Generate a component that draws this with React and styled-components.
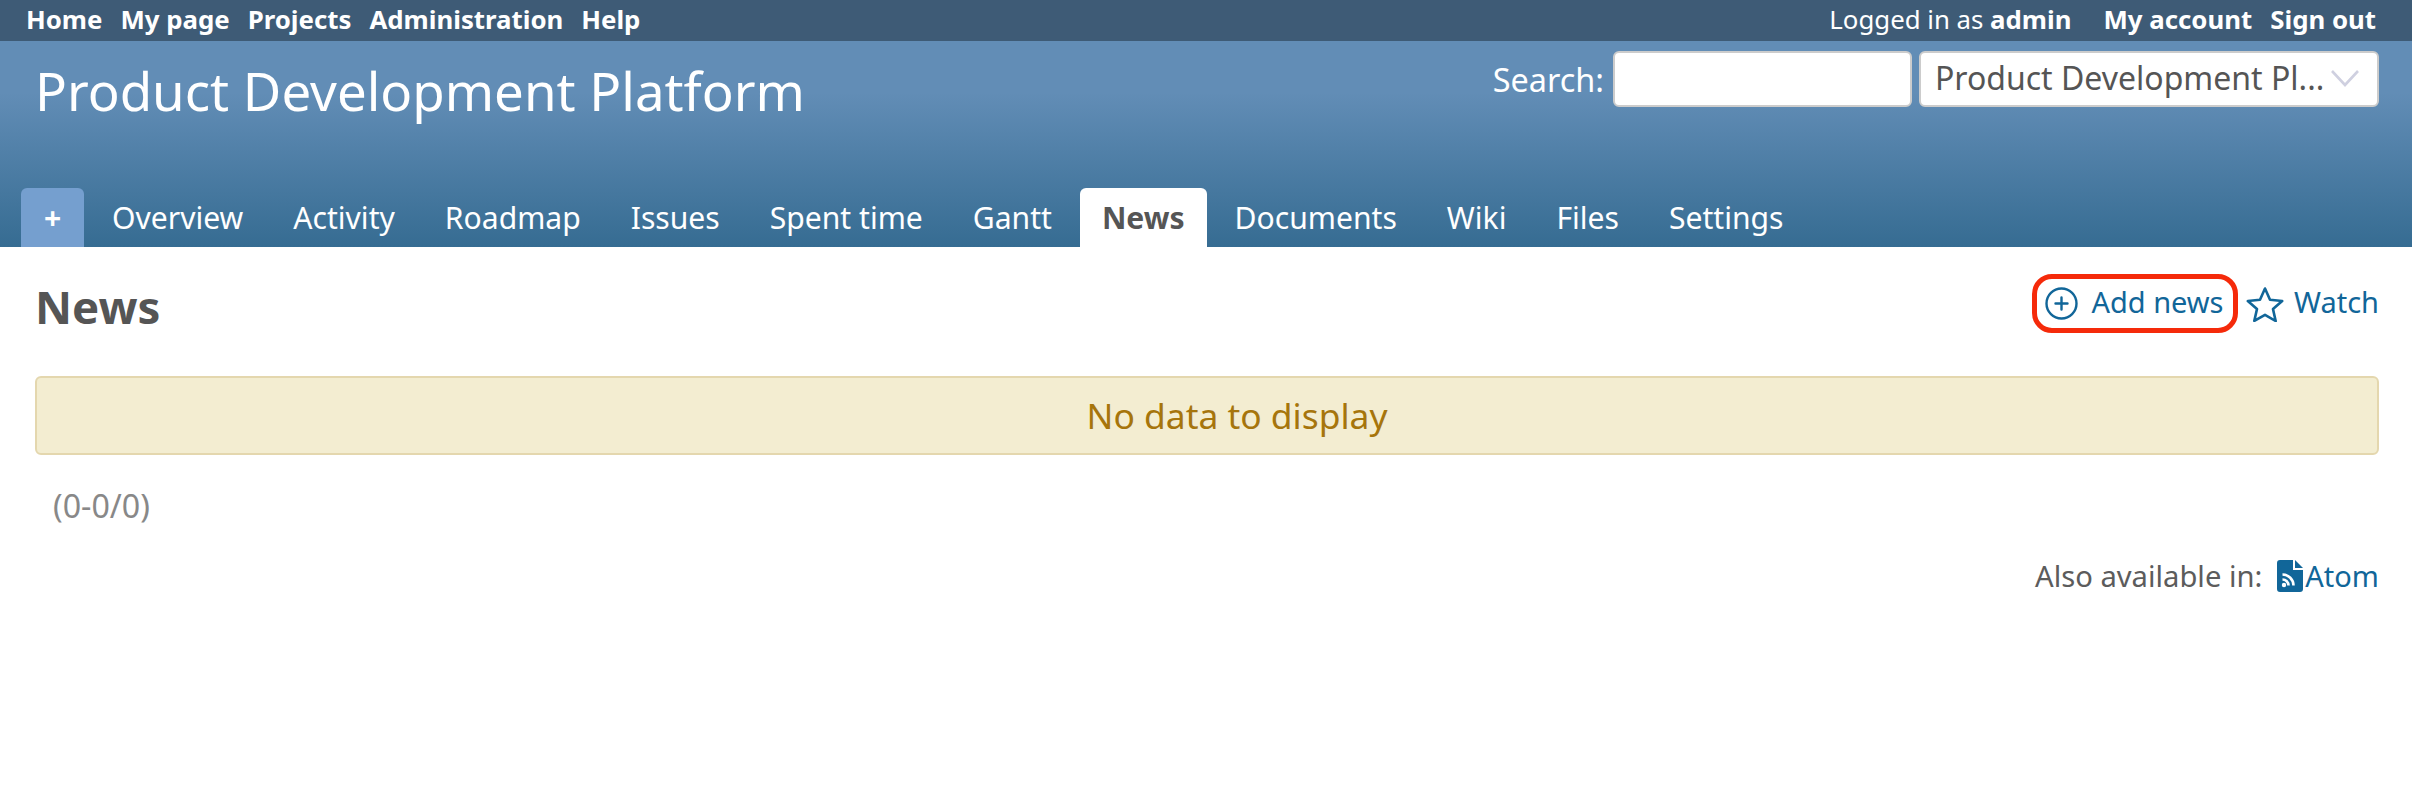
import React from 'react';
import styled, { createGlobalStyle } from 'styled-components';

const Global = createGlobalStyle`
  html, body { margin: 0; padding: 0; background: #fff; }
  body { font-family: "Noto Sans", sans-serif; color: #555; }
  * { box-sizing: border-box; }
`;
const Page = styled.div`width: 2412px; height: 800px; overflow: hidden; background: #fff;`;
const TopMenu = styled.div`
  height: 41px; background: #3e5b76; display: flex; justify-content: space-between; align-items: center;
  padding: 0 36px 4px 26px; color: #fff; font-size: 25.8px; white-space: nowrap;
`;
const TopGroup = styled.div`display: flex; align-items: center; gap: ${p => p.$gap}px;`;
const TopLink = styled.span`font-weight: 700;`;
const Logged = styled.span`margin-right: 14px; b { font-weight: 700; }`;
const Header = styled.header`
  height: 206px; padding: 10px 33px 0 21px; display: flex; flex-direction: column;
  background: linear-gradient(#628db6 0%, #628db6 25%, #366c92 100%);
`;
const HeaderTop = styled.div`display: flex; justify-content: space-between; align-items: flex-start;`;
const Title = styled.h1`margin: 5px 0 0 14px; font-size: 52.8px; font-weight: 400; color: #fff; line-height: 70px; white-space: nowrap;`;
const SearchForm = styled.div`display: flex; align-items: center; gap: 9px; color: #fff; font-size: 32.4px; line-height: 52px;`;
const SearchInput = styled.input`
  width: 299px; height: 56px; border: 2px solid #ccc; border-radius: 6px; background: #fff; outline: none; padding: 0;
  margin-right: -2px;
`;
const ProjectSelect = styled.div`
  width: 460px; height: 56px; border: 2px solid #ccc; border-radius: 6px; background: #fff; color: #555;
  display: flex; align-items: center; justify-content: space-between; padding: 0 17px 3px 14px; font-size: 32px; white-space: nowrap;
`;
const Tabs = styled.nav`margin-top: auto; display: flex; gap: 6px; height: 59px;`;
const Tab = styled.div`
  padding: 0 22px; font-size: 30.1px; line-height: 59px; color: ${p => p.$selected ? '#555' : '#fff'};
  font-weight: ${p => p.$selected ? 700 : 400}; border-radius: 6px 6px 0 0; white-space: nowrap;
  background: ${p => p.$selected ? '#fff' : 'transparent'};
`;
const PlusTab = styled(Tab)`width: 63px; padding: 0; text-align: center; background: #759fcf; font-weight: 700;`;
const Content = styled.main`padding: 27px 33px 0 35px;`;
const TitleRow = styled.div`display: flex; justify-content: space-between; align-items: center; height: 59px;`;
const Heading = styled.h2`margin: 6px 0 0; font-size: 45.6px; font-weight: 700; color: #555; line-height: 59px;`;
const Actions = styled.div`display: flex; align-items: center; gap: 8.5px; font-size: 29px; color: #169; line-height: 40px;`;
const Action = styled.div`display: flex; align-items: center; gap: ${p => p.$gap}px; white-space: nowrap; span { position: relative; top: -2px; }`;
const Highlight = styled(Action)`height: 59px; padding: 0 9px 0 8px; border: 5px solid #f52a0a; border-radius: 20px;`;
const NoData = styled.div`
  margin-top: 43px; height: 79px; padding-left: 60px; border: 2px solid #e4d7ae; border-radius: 6px; background: #f3edd1;
  color: #a6750c; font-size: 35.4px; text-align: center; line-height: 75px;
`;
const Pagination = styled.div`margin: 29px 0 0 18px; font-size: 32.2px; color: #888; line-height: 44px;`;
const Other = styled.div`
  margin-top: 28px; display: flex; justify-content: flex-end; align-items: center; font-size: 29.2px; line-height: 40px; color: #5c5c5c;
`;
const AtomLink = styled.span`display: flex; align-items: center; color: #169; margin-left: 15px; gap: 2px; font-size: 29px;`;

const PlusCircle = () => (
  <svg width="33" height="33" viewBox="0 0 33 33" fill="none" stroke="#169" strokeWidth="2.4" strokeLinecap="round">
    <circle cx="16.5" cy="16.500" r="15" /><path d="M16.500 10.500v12M10.500 16.500h12" />
  </svg>
);
const Star = () => (
  <svg width="38" height="36" viewBox="0 0 38 36" fill="none" stroke="#169" strokeWidth="2.6" strokeLinejoin="round">
    <path d="M19 2.5l5 11.3 12.2 1.2-9.2 8.1 2.7 11.9L19 28.8 8.300 34.900 11 23 1.800 15l12.200-1.200z" />
  </svg>
);
const Chevron = () => (
  <svg width="30" height="18" viewBox="0 0 30 18" fill="none" stroke="#cfd0e0" strokeWidth="2.6">
    <path d="M2 2l13 14L28 2" />
  </svg>
);
const AtomIcon = () => (
  <svg width="26" height="32" viewBox="0 0 26 32">
    <path fill="#169" d="M3 0h13v10h10v19a3 3 0 0 1-3 3H3a3 3 0 0 1-3-3V3a3 3 0 0 1 3-3zM18 0l8 8h-8z" />
    <g fill="none" stroke="#fff" strokeWidth="2.6">
      <path d="M5.500 14.500a11 11 0 0 1 11 11M5.500 19.500a6 6 0 0 1 6 6" />
    </g>
    <circle cx="7" cy="25" r="2.200" fill="#fff" />
  </svg>
);

const tabs = ['Overview', 'Activity', 'Roadmap', 'Issues', 'Spent time', 'Gantt', 'News', 'Documents', 'Wiki', 'Files', 'Settings'];

export default function App() {
  return (
    <Page>
      <Global />
      <TopMenu>
        <TopGroup $gap={18}>
          {['Home', 'My page', 'Projects', 'Administration', 'Help'].map(t => <TopLink key={t}>{t}</TopLink>)}
        </TopGroup>
        <TopGroup $gap={18}>
          <Logged>Logged in as <b>admin</b></Logged>
          <TopLink>My account</TopLink>
          <TopLink>Sign out</TopLink>
        </TopGroup>
      </TopMenu>
      <Header>
        <HeaderTop>
          <Title>Product Development Platform</Title>
          <SearchForm>
            <span>Search:</span>
            <SearchInput />
            <ProjectSelect>
              <span>Product Development Pl...</span>
              <Chevron />
            </ProjectSelect>
          </SearchForm>
        </HeaderTop>
        <Tabs>
          <PlusTab>+</PlusTab>
          {tabs.map(t => <Tab key={t} $selected={t === 'News'}>{t}</Tab>)}
        </Tabs>
      </Header>
      <Content>
        <TitleRow>
          <Heading>News</Heading>
          <Actions>
            <Highlight $gap={13}><PlusCircle /><span>Add news</span></Highlight>
            <Action $gap={10}><Star /><span>Watch</span></Action>
          </Actions>
        </TitleRow>
        <NoData>No data to display</NoData>
        <Pagination>(0-0/0)</Pagination>
        <Other>
          Also available in:
          <AtomLink><AtomIcon />Atom</AtomLink>
        </Other>
      </Content>
    </Page>
  );
}
